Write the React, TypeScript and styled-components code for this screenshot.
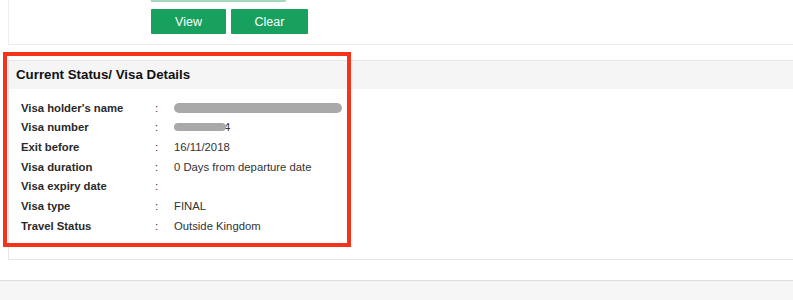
import React from "react"
import styled, { createGlobalStyle } from "styled-components"

const GlobalStyle = createGlobalStyle`
  html, body {
    margin: 0;
    padding: 0;
    background: #fff;
    overflow: hidden;
  }
  body {
    font-family: "Liberation Sans", Arial, Helvetica, sans-serif;
    color: #222;
  }
`

const rows: { label: string; value?: string; redact?: "long" | "short" }[] = [
  { label: "Visa holder's name", redact: "long" },
  { label: "Visa number", redact: "short" },
  { label: "Exit before", value: "16/11/2018" },
  { label: "Visa duration", value: "0 Days from departure date" },
  { label: "Visa expiry date", value: "" },
  { label: "Visa type", value: "FINAL" },
  { label: "Travel Status", value: "Outside Kingdom" },
]

export default function App() {
  return <Page>
    <GlobalStyle/>
    <SearchPanel>
      <Field/>
      <Actions>
        <Button>View</Button>
        <Button>Clear</Button>
      </Actions>
    </SearchPanel>

    <StatusPanel>
      <Highlight/>
      <PanelHeader>Current Status/ Visa Details</PanelHeader>
      <Details>
        {rows.map(r => (
          <Row key={r.label}>
            <Label>{r.label}</Label>
            <Colon>:</Colon>
            <Value>
              {r.redact === "long" && <Redacted $width={168}/>}
              {r.redact === "short" && <>
                <Redacted $width={52} $height={8}/>
                <Tail>4</Tail>
              </>}
              {r.value}
            </Value>
          </Row>
        ))}
      </Details>
    </StatusPanel>

    <Footer/>
  </Page>
}

const Page = styled.div`
  width: 793px;
  height: 322px;
  overflow: hidden;
  margin-top: -22px;
`

const SearchPanel = styled.div`
  margin-left: 8px;
  width: 820px;
  border: 1px solid #ececec;
  border-top: none;
  padding: 0 0 10px 142px;
  box-sizing: border-box;
`

const Field = styled.div`
  width: 135px;
  height: 24px;
  border: 1px solid #a6d9bf;
  border-bottom-width: 2px;
  border-top: none;
  background: #fff;
  box-sizing: border-box;
`

const Actions = styled.div`
  display: flex;
  gap: 5px;
  margin-top: 7px;
`

const Button = styled.button`
  width: 75px;
  height: 25px;
  border: none;
  border-radius: 1px;
  background: #17a05e;
  color: #fff;
  font-family: "Liberation Sans", Arial, sans-serif;
  font-size: 12.5px;
  padding: 0;
  &:nth-child(2) {
    width: 77px;
  }
`

const StatusPanel = styled.div`
  position: relative;
  margin: 15px 0 0 8px;
  width: 820px;
  border: 1px solid #e6e6e6;
  box-sizing: border-box;
`

const Highlight = styled.div`
  position: absolute;
  left: -6px;
  top: -9px;
  width: 348px;
  height: 195px;
  border: 4px solid #f4331a;
  box-sizing: border-box;
  pointer-events: none;
  z-index: 2;
`

const PanelHeader = styled.div`
  height: 28px;
  line-height: 28px;
  background: #f5f5f5;
  padding-left: 7px;
  font-size: 13.3px;
  font-weight: bold;
  color: #111;
`

const Details = styled.div`
  padding: 9px 0 23px 12px;
`

const Row = styled.div`
  display: flex;
  align-items: center;
  height: 19.67px;
  font-size: 11.3px;
`

const Label = styled.div`
  width: 134px;
  font-weight: bold;
  color: #2a2a2a;
`

const Colon = styled.div`
  width: 19px;
  color: #333;
`

const Value = styled.div`
  display: flex;
  align-items: center;
  color: #333;
`

const Redacted = styled.span<{ $width: number; $height?: number }>`
  display: inline-block;
  width: ${p => p.$width}px;
  height: ${p => p.$height ?? 10}px;
  border-radius: 6px;
  background: #a9a9a9;
  filter: blur(0.6px);
`

const Tail = styled.span`
  margin-left: -2px;
  color: #333;
`

const Footer = styled.div`
  margin-top: 20px;
  height: 40px;
  border-top: 1px solid #dedede;
  background: #f6f6f6;
`
